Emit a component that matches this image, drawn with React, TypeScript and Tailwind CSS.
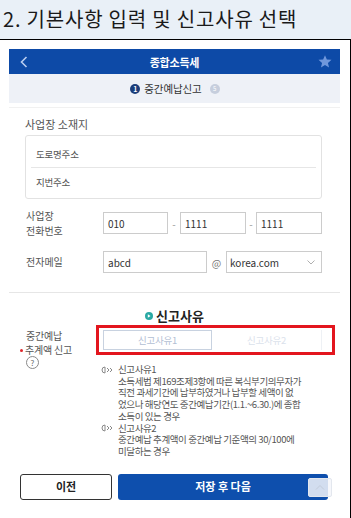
import React from "react";

const F = { fontFamily: '"Noto Sans CJK KR", "Noto Sans", sans-serif' };

function NoteIcon() {
  return (
    <svg width="14" height="8" viewBox="0 0 14 8" className="shrink-0">
      <path d="M5 1 A3 3 0 1 0 5 7 Z" fill="none" stroke="#8a8a8a" strokeWidth="1" />
      <path d="M7 2 L9 4 L7 6 M10 2 L12 4 L10 6" fill="none" stroke="#8a8a8a" strokeWidth="1" />
    </svg>
  );
}

export default function App() {
  return (
    <div className="relative w-[351px] h-[518px] overflow-hidden bg-white" style={F}>
      {/* Title band */}
      <div className="h-[40px] bg-[#e9f0f7] border-b border-black pl-[3px] flex items-center">
        <span className="text-[20px] leading-[24px] text-[#1a1a1a] mt-[-1px] tracking-[0.8px]">2. 기본사항 입력 및 신고사유 선택</span>
      </div>

      {/* Body */}
      <div className="h-[478px] border-r border-black pl-[9px] pr-[10px] pt-[9px]">
        {/* Blue header */}
        <div className="h-[25px] bg-[#0d4aa7] grid grid-cols-[1fr_auto_1fr] items-center">
          <div className="pl-[11px]">
            <svg width="8" height="12" viewBox="0 0 8 12">
              <path d="M6.5 1 L1.5 6 L6.5 11" fill="none" stroke="#b9cdf0" strokeWidth="1.6" />
            </svg>
          </div>
          <div className="text-[11px] font-bold text-white leading-[14px] tracking-[-0.2px]">종합소득세</div>
          <div className="flex justify-end pr-[8px]">
            <svg width="14" height="13" viewBox="0 0 24 23">
              <path d="M12 0.5 L15.3 8 L23.5 8.6 L17.2 14 L19.2 22.2 L12 17.8 L4.8 22.2 L6.8 14 L0.5 8.6 L8.7 8 Z" fill="#6f97dc" />
            </svg>
          </div>
        </div>

        {/* Step bar */}
        <div className="h-[29px] bg-[#eef1f7] flex items-center justify-center gap-[4px] pl-[1px]">
          <span className="w-[10px] h-[10px] rounded-full bg-[#1b3d7a] text-white text-[7px] font-bold leading-[10px] flex items-center justify-center">1</span>
          <span className="text-[10.5px] text-[#333] leading-[14px] tracking-[-0.1px] mr-[4px]">중간예납신고</span>
          <span className="w-[10px] h-[10px] rounded-full bg-[#c6cedd] text-white text-[6px] leading-[10px] flex items-center justify-center">5</span>
        </div>

        <div className="mt-[4px] h-px bg-[#f1f1f1]" />

        {/* Address */}
        <div className="pl-[16px] pr-[18px]">
          <div className="mt-[8px] text-[11px] leading-[16px] text-[#555]">사업장 소재지</div>
          <div className="mt-[3px] h-[64px] border border-[#e2e2e2] rounded-[3px]">
            <div className="h-[31px] pt-[11px] pl-[10px] text-[9.5px] leading-[14px] text-[#555] tracking-[-0.2px]">도로명주소</div>
            <div className="mx-[5px] h-px bg-[#e6e6e6]" />
            <div className="h-[30px] pt-[7px] pl-[10px] text-[9.5px] leading-[14px] text-[#555] tracking-[-0.2px]">지번주소</div>
          </div>
        </div>

        {/* Phone */}
        <div className="mt-[9px] flex items-center pl-[17px] pr-[18px]">
          <div className="w-[77px] text-[10px] leading-[15px] text-[#555]">
            사업장<br />전화번호
          </div>
          <div className="w-[65px] h-[22px] border border-[#cccccc] flex items-center pl-[4px] text-[10px] text-[#333]">010</div>
          <div className="w-[12px] text-center text-[10px] text-[#999]">-</div>
          <div className="w-[66px] h-[22px] border border-[#cccccc] flex items-center pl-[4px] text-[10px] text-[#333]">1111</div>
          <div className="w-[10px] text-center text-[10px] text-[#999]">-</div>
          <div className="w-[66px] h-[22px] border border-[#cccccc] flex items-center pl-[4px] text-[10px] text-[#333]">1111</div>
        </div>

        {/* Email */}
        <div className="mt-[13px] flex items-center pl-[17px] pr-[18px]">
          <div className="w-[77px] text-[10px] leading-[15px] text-[#555] mt-[-2px]">전자메일</div>
          <div className="w-[104px] h-[22px] border border-[#cccccc] flex items-center pl-[4px] text-[10px] text-[#333]">abcd</div>
          <div className="w-[19px] text-center text-[10px] text-[#777]">@</div>
          <div className="w-[96px] h-[22px] border border-[#cccccc] flex items-center justify-between pl-[3px] pr-[6px] text-[10px] text-[#333]">
            <span>korea.com</span>
            <svg width="8" height="5" viewBox="0 0 8 5">
              <path d="M0.5 0.5 L4 4 L7.5 0.5" fill="none" stroke="#9a9a9a" strokeWidth="0.8" />
            </svg>
          </div>
        </div>

        <div className="mt-[19px] h-px bg-[#e6e6e6]" />

        {/* Heading */}
        <div className="mt-[14px] flex items-center justify-center gap-[3px] h-[18px]">
          <span className="w-[8px] h-[8px] rounded-full bg-[#2aa9a4] flex items-center justify-center">
            <svg width="4" height="4" viewBox="0 0 4 4">
              <path d="M0.8 0.3 L3.6 2 L0.8 3.7 Z" fill="white" />
            </svg>
          </span>
          <span className="text-[13px] font-bold text-[#222] leading-[18px]">신고사유</span>
        </div>

        {/* Reason section */}
        <div className="flex">
          <div className="w-[87px] pt-[4px] shrink-0">
            <div className="pl-[17px] text-[10px] leading-[14px] text-[#555] tracking-[-0.2px]">중간예납</div>
            <div className="pl-[11px] flex items-center gap-[2px] text-[10px] leading-[14px] text-[#555] tracking-[-0.2px]">
              <span className="w-[3px] h-[3px] rounded-full bg-[#e0262b]" />
              <span>추계액 신고</span>
            </div>
            <div className="ml-[17px] mt-[-1px] w-[13px] h-[13px] rounded-full border border-[#8a8a8a] flex items-center justify-center text-[8px] leading-[8px] text-[#666]">?</div>
          </div>
          <div className="flex-1">
            <div className="w-[239px] h-[30px] border-[3px] border-[#e3161e] pl-[4px] pr-[10px] pt-[2px]">
              <div className="flex h-[20px]">
                <div className="w-[109px] h-[20px] border border-[#c8d2e0] flex items-center justify-center text-[9.5px] text-[#b3c0d4] tracking-[-0.2px]">신고사유1</div>
                <div className="flex-1 h-[20px] border-r border-[#eef1f5] flex items-center justify-center text-[9.5px] text-[#dbe2ec] tracking-[-0.2px]">신고사유2</div>
              </div>
            </div>
            <div className="mt-[9px] text-[9.5px] leading-[11.7px] text-[#555] tracking-[-0.4px]">
              <div className="flex items-center gap-[4px] pl-[4px]">
                <NoteIcon />
                <span>신고사유1</span>
              </div>
              <div className="pl-[22px]">소득세법 제169조제3항에 따른 복식부기의무자가</div>
              <div className="pl-[22px]">직전 과세기간에 납부하였거나 납부할 세액이 없</div>
              <div className="pl-[22px]">었으나 해당연도 중간예납기간(1.1.~6.30.)에 종합</div>
              <div className="pl-[22px]">소득이 있는 경우</div>
              <div className="flex items-center gap-[4px] pl-[4px]">
                <NoteIcon />
                <span>신고사유2</span>
              </div>
              <div className="pl-[22px]">중간예납 추계액이 중간예납 기준액의 30/100에</div>
              <div className="pl-[22px]">미달하는 경우</div>
            </div>
          </div>
        </div>

        {/* Buttons */}
        <div className="mt-[16px] flex gap-[6px] pl-[11px] pr-[12px]">
          <div className="w-[92px] h-[26px] border-[1.5px] border-[#333] rounded-[3px] flex items-center justify-center text-[11px] font-bold text-[#222]">이전</div>
          <div className="flex-1 h-[26px] bg-[#0e4fad] rounded-[3px] flex items-center justify-center text-[11px] font-bold text-white">저장 후 다음</div>
        </div>
      </div>

      {/* Scroll to top */}
      <div className="absolute left-[308px] top-[478px] w-[24px] h-[19px] border border-[#e3e7ee] bg-[#f4f6fa]/85 rounded-[2px] flex items-center justify-center">
        <svg width="10" height="7" viewBox="0 0 10 7">
          <path d="M1 5.5 L5 1.5 L9 5.5" fill="none" stroke="#c3ccda" strokeWidth="1" />
        </svg>
      </div>
    </div>
  );
}
